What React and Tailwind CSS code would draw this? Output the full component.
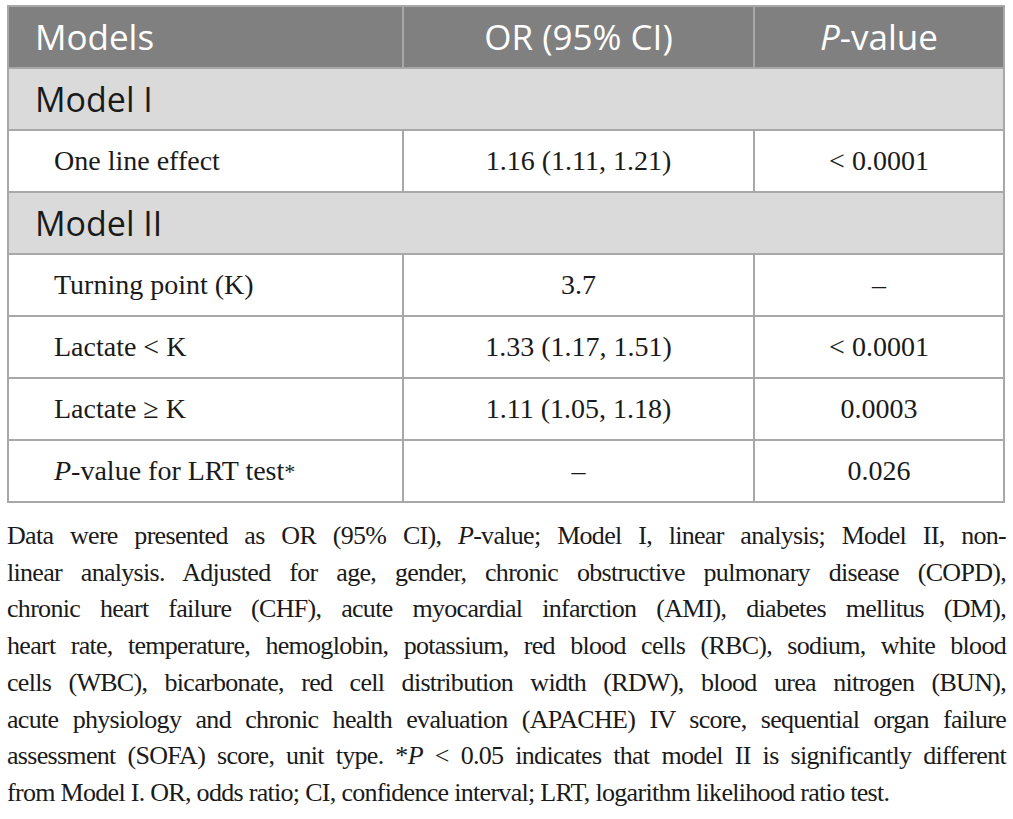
import React from "react";

const sans = "font-['Open_Sans','Noto_Sans',sans-serif]";
const serif = "font-['Liberation_Serif','Times_New_Roman',serif]";

const cell = "border-2 border-[#a8a8a8] h-[62px] p-0 align-middle";

function GroupRow({ label }) {
    return (
        <tr className="bg-[#dadada]">
            <td colSpan={3} className={`${cell} ${sans} text-[34px] text-[#1a1a1a] pl-[26px]`}>
                {label}
            </td>
        </tr>
    );
}

function DataRow({ label, or, p }) {
    return (
        <tr className="bg-white">
            <td className={`${cell} pl-[45px] text-left`}>{label}</td>
            <td className={`${cell} text-center`}>{or}</td>
            <td className={`${cell} text-center`}>{p}</td>
        </tr>
    );
}

const captionLines = [
    <>Data were presented as OR (95% CI), <i>P</i>-value; Model I, linear analysis; Model II, non-</>,
    <>linear analysis. Adjusted for age, gender, chronic obstructive pulmonary disease (COPD),</>,
    <>chronic heart failure (CHF), acute myocardial infarction (AMI), diabetes mellitus (DM),</>,
    <>heart rate, temperature, hemoglobin, potassium, red blood cells (RBC), sodium, white blood</>,
    <>cells (WBC), bicarbonate, red cell distribution width (RDW), blood urea nitrogen (BUN),</>,
    <>acute physiology and chronic health evaluation (APACHE) IV score, sequential organ failure</>,
    <>assessment (SOFA) score, unit type. *<i>P</i> &lt; 0.05 indicates that model II is significantly different</>,
];

export default function App() {
    return (
        <div className="w-[1013px] h-[819px] bg-white overflow-hidden pt-[5px] px-[7px]">
            {/* Tabela */}
            <table className={`w-[998px] border-collapse table-fixed ${serif} text-[28px] text-[#1a1a1a]`}>
                <colgroup>
                    <col className="w-[395px]" />
                    <col className="w-[351px]" />
                    <col />
                </colgroup>
                <thead>
                    <tr className={`bg-[#808080] text-white ${sans} text-[35px]`}>
                        <th className={`${cell} font-normal text-left pl-[26px]`}>Models</th>
                        <th className={`${cell} font-normal text-center`}>OR (95% CI)</th>
                        <th className={`${cell} font-normal text-center`}>
                            <i>P</i>-value
                        </th>
                    </tr>
                </thead>
                <tbody>
                    <GroupRow label="Model I" />
                    <DataRow label="One line effect" or="1.16 (1.11, 1.21)" p="< 0.0001" />
                    <GroupRow label="Model II" />
                    <DataRow label="Turning point (K)" or="3.7" p="–" />
                    <DataRow label="Lactate < K" or="1.33 (1.17, 1.51)" p="< 0.0001" />
                    <DataRow label="Lactate ≥ K" or="1.11 (1.05, 1.18)" p="0.0003" />
                    <DataRow
                        label={
                            <>
                                <i>P</i>-value for LRT test<sup className="text-[22px] relative -top-[1px]">*</sup>
                            </>
                        }
                        or="–"
                        p="0.026"
                    />
                </tbody>
            </table>

            {/* Legenda */}
            <div className={`mt-[15px] w-[999px] ${serif} text-[26px] tracking-[-0.7px] leading-[36.7px] text-[#1a1a1a]`}>
                {captionLines.map((line, i) => (
                    <div key={i} className="text-justify [text-align-last:justify] whitespace-nowrap">
                        {line}
                    </div>
                ))}
                <div>from Model I. OR, odds ratio; CI, confidence interval; LRT, logarithm likelihood ratio test.</div>
            </div>
        </div>
    );
}
